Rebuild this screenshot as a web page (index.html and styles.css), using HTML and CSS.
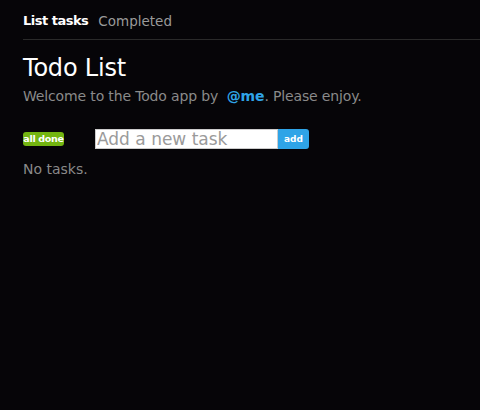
FILE: index.html
```html
<!DOCTYPE html>
<html>
<head>
<meta charset="utf-8">
<link rel="stylesheet" href="styles.css">
</head>
<body>
<div class="page">
  <nav class="nav">
    <a class="nav-link active">List tasks</a>
    <a class="nav-link">Completed</a>
  </nav>
  <h1 class="title">Todo List</h1>
  <p class="lead">Welcome to the Todo app by &nbsp;<a class="me">@me</a>. Please enjoy.</p>
  <div class="controls">
    <span class="badge">all done</span>
    <div class="add-form">
      <input class="task-input" type="text" placeholder="Add a new task">
      <button class="add-btn">add</button>
    </div>
  </div>
  <p class="empty">No tasks.</p>
</div>
</body>
</html>
```
FILE: styles.css
```css
html, body {
  margin: 0;
  padding: 0;
  background: #060508;
  height: 100%;
}
body {
  font-family: "DejaVu Sans", Verdana, sans-serif;
  color: #8a8a8a;
}
.page {
  padding: 0 0 0 23px;
}
.nav {
  display: flex;
  gap: 10px;
  height: 39px;
  align-items: center;
  border-bottom: 1px solid #2a2a2a;
}
.nav-link {
  font-size: 13.5px;
  color: #9a9a9a;
  padding-top: 2px;
}
.nav-link.active {
  color: #ffffff;
  font-weight: bold;
  font-size: 13px;
  letter-spacing: -0.5px;
}
.title {
  margin: 13px 0 0;
  font-size: 24px;
  font-weight: normal;
  color: #ffffff;
  line-height: 30px;
  letter-spacing: -0.2px;
}
.lead {
  margin: 3px 0 0;
  font-size: 14px;
  line-height: 20px;
  color: #8a8a8a;
  letter-spacing: -0.15px;
}
.me {
  color: #2fa4e7;
  font-weight: bold;
}
.controls {
  display: flex;
  align-items: center;
  margin-top: 23px;
}
.badge {
  display: block;
  background: #73b511;
  color: #ffffff;
  font-size: 9.5px;
  font-weight: bold;
  border-radius: 3px;
  height: 14px;
  line-height: 14px;
  width: 41px;
  white-space: nowrap;
  text-align: center;
  letter-spacing: -0.3px;
}
.add-form {
  display: flex;
  margin-left: 31px;
}
.task-input {
  width: 183px;
  height: 20px;
  box-sizing: border-box;
  border: 1px solid #cccccc;
  border-radius: 0;
  padding: 0 1px;
  font-family: inherit;
  font-size: 17px;
  color: #333;
  background: #fff;
  outline: none;
}
.task-input::placeholder {
  color: #9a9a9a;
}
.add-btn {
  width: 31px;
  height: 20px;
  border: none;
  border-radius: 0 3px 3px 0;
  background: #2fa4e7;
  color: #ffffff;
  font-family: inherit;
  font-size: 9px;
  font-weight: bold;
  padding: 0;
}
.empty {
  margin: 10px 0 0;
  font-size: 14px;
  line-height: 20px;
  color: #8a8a8a;
}
```
